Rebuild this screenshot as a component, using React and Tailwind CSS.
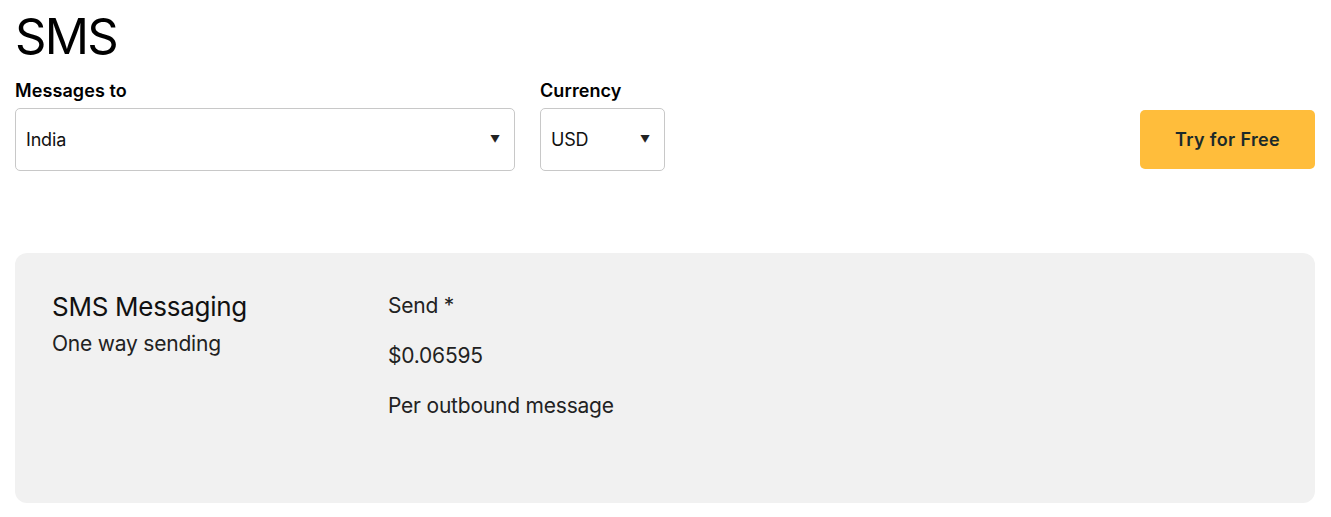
import React from 'react';

const font = { fontFamily: 'Inter, "Liberation Sans", sans-serif' };

function Select({ value, width }) {
    return (
        <div className={`${width} h-[63px] border border-[#c8c8c8] rounded-[5px] bg-white flex items-center justify-between pl-[10px] pr-[14px]`}>
            <span className="text-[18px] text-[#111] tracking-[-0.01em]">{value}</span>
            <span className="text-[10px] text-[#222]">▼</span>
        </div>
    );
}

export default function App() {
    return (
        <div className="w-[1331px] h-[517px] bg-white pl-[15px] pr-[16px] overflow-hidden text-black" style={font}>
            {/* Title */}
            <h1 className="text-[49px] leading-none font-normal tracking-[-0.035em] pt-[12px] h-[79px]">SMS</h1>

            {/* Controls */}
            <div className="flex items-end">
                <div className="flex flex-col">
                    <label className="text-[18px] font-semibold tracking-[0.005em] leading-[20px] mb-[7px] mt-[2px]">Messages to</label>
                    <Select value="India" width="w-[500px]" />
                </div>
                <div className="flex flex-col ml-[25px]">
                    <label className="text-[18px] font-semibold tracking-[0.005em] leading-[20px] mb-[7px] mt-[2px]">Currency</label>
                    <Select value="USD" width="w-[125px]" />
                </div>
                <div className="flex-1" />
                <button className="w-[175px] h-[59px] mb-[2px] bg-[#ffbd3b] rounded-[5px] text-[18px] font-semibold text-[#1b2a2a] tracking-[0.02em]">
                    Try for Free
                </button>
            </div>

            {/* Pricing card */}
            <div className="mt-[82px] h-[250px] bg-[#f1f1f1] rounded-[12px] flex pl-[37px] pt-[38px]">
                <div className="w-[336px]">
                    <div className="text-[26px] tracking-[-0.01em] leading-[32px] text-[#111]">SMS Messaging</div>
                    <div className="text-[21px] tracking-[-0.01em] leading-[30px] mt-[6px] text-[#222]">One way sending</div>
                </div>
                <div className="flex flex-col gap-[20px] text-[21px] tracking-[-0.01em] leading-[30px] text-[#222]">
                    <div>Send *</div>
                    <div>$0.06595</div>
                    <div>Per outbound message</div>
                </div>
            </div>
        </div>
    );
}
